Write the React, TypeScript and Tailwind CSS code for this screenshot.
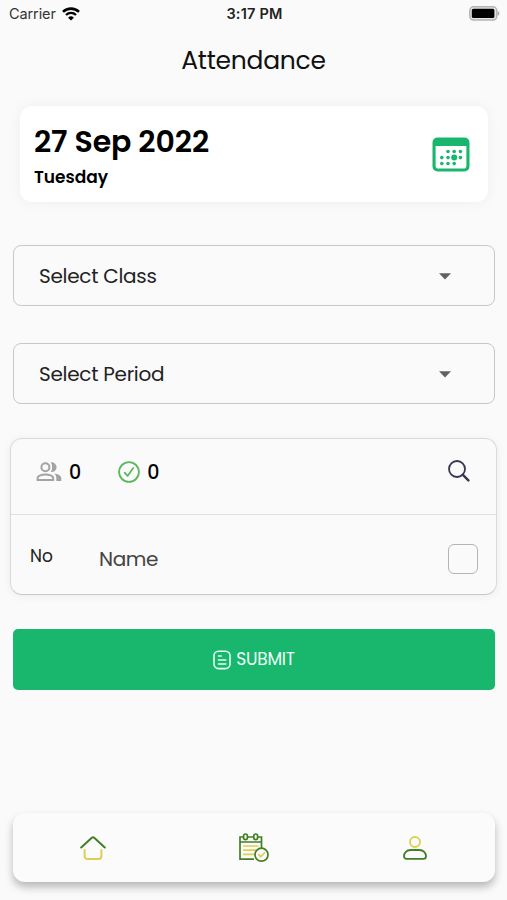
import type { ReactNode } from 'react'

type SelectProps = {
    label: string
}

function WifiIcon() {
    return (
        <svg className="w-[18px] h-[14px]" viewBox="0 0 18 14" fill="none" stroke="#000">
            <path d="M1 4.9a11.3 11.3 0 0 1 16 0" strokeWidth="2.6" />
            <path d="M4 8a7 7 0 0 1 10 0" strokeWidth="2.2" />
            <path d="M9 13.6 6.1 10.7a4.1 4.1 0 0 1 5.8 0Z" fill="#000" stroke="none" />
        </svg>
    )
}

function BatteryIcon() {
    return (
        <svg className="w-[31px] h-[15px]" viewBox="0 0 31 15">
            <rect x="0.8" y="0.8" width="27" height="13.2" rx="3.8" fill="#e4e4e4" stroke="#b4b4b4" strokeWidth="1.5" />
            <rect x="2.8" y="2.8" width="22.6" height="9.2" rx="1.6" fill="#000" />
            <path d="M28.6 5c2.4.8 2.4 4 0 4.8Z" fill="#a8a8a8" />
        </svg>
    )
}

function CalendarIcon() {
    return (
        <svg className="w-[38px] h-[35px]" viewBox="0 0 38 35" fill="#18b76d">
            <path fillRule="evenodd" d="M5.5.5h27a5 5 0 0 1 5 5v24a5 5 0 0 1-5 5h-27a5 5 0 0 1-5-5v-24a5 5 0 0 1 5-5ZM3.6 9v19.8a2.8 2.8 0 0 0 2.8 2.8h25.2a2.8 2.8 0 0 0 2.8-2.8V9Z" />
            <circle cx="16" cy="14.5" r="1.8" />
            <circle cx="22.2" cy="14.5" r="1.8" />
            <circle cx="28.4" cy="14.5" r="1.8" />
            <circle cx="9.8" cy="20.6" r="1.8" />
            <circle cx="16" cy="20.6" r="1.8" />
            <circle cx="22.2" cy="20.6" r="3" />
            <circle cx="28.4" cy="20.6" r="1.8" />
            <circle cx="9.8" cy="26.6" r="1.8" />
            <circle cx="16" cy="26.6" r="1.8" />
            <circle cx="22.2" cy="26.6" r="1.8" />
        </svg>
    )
}

function PeopleIcon() {
    return (
        <svg className="w-[26px] h-[20px]" viewBox="0 0 26 20" fill="none" stroke="#a3a3a3" strokeWidth="2">
            <circle cx="9.4" cy="5.2" r="4" />
            <path d="M1.6 18.1v-2c0-2.4 4.5-3.7 7.8-3.7s7.8 1.3 7.8 3.7v2Z" />
            <path d="M14.7.4a4.9 4.9 0 1 1 0 9.6c1.9-2.7 1.9-6.9 0-9.6Z" fill="#a3a3a3" stroke="none" />
            <path d="M18.3 11.5c3.7.5 7 2.2 7 4.7v2.9h-5v-2.9c0-2-.7-3.6-2-4.7Z" fill="#a3a3a3" stroke="none" />
        </svg>
    )
}

function CheckCircleIcon() {
    return (
        <svg className="w-[22px] h-[22px]" viewBox="0 0 22 22" fill="none" stroke="#5cb85f" strokeWidth="1.8" strokeLinecap="round" strokeLinejoin="round">
            <circle cx="11" cy="11" r="9.9" />
            <path d="m6.7 11.7 2.9 3.2 5.6-7.8" />
        </svg>
    )
}

function SearchIcon() {
    return (
        <svg className="w-[22px] h-[22px]" viewBox="0 0 22 22" fill="none" stroke="#39344f">
            <circle cx="9" cy="9" r="8" strokeWidth="1.8" />
            <path d="m14.7 14.7 5.7 5.7" strokeWidth="2.4" strokeLinecap="round" />
        </svg>
    )
}

function NoteIcon() {
    return (
        <svg className="w-[18px] h-[20px]" viewBox="0 0 18 20" fill="none" stroke="#e6fff2" strokeWidth="1.6" strokeLinecap="round">
            <rect x="1" y="1.2" width="16" height="17.4" rx="4.5" />
            <path d="M5.5 6h2.7M5.500 10h7.3M5.5 14h7.3" />
        </svg>
    )
}

function HomeIcon() {
    return (
        <svg className="w-[26px] h-[24px]" viewBox="0 0 26 24" fill="none" strokeWidth="2" strokeLinecap="round" strokeLinejoin="round">
            <path d="M1.2 11.5 11.8 1.8a1.8 1.8 0 0 1 2.4 0l10.6 9.7" stroke="#437f24" />
            <path d="M4.6 14v6.3a2.700 2.700 0 0 0 2.7 2.7h11.4a2.7 2.7 0 0 0 2.7-2.7V14" stroke="#ddcf52" />
        </svg>
    )
}

function AttendanceIcon() {
    return (
        <svg className="w-[30px] h-[30px]" viewBox="0 0 30 30" fill="none" stroke="#437f24" strokeWidth="1.7">
            <path d="M15 26.2H1V4h21.5v11.5M1 9h21.5" />
            <g stroke="#ddcf52" strokeLinecap="round">
                <path d="M4.8 13h14M4.8 17.2h12M4.8 21.4h10" />
            </g>
            <rect x="4.600" y="1" width="3.8" height="5.6" rx="1.9" fill="#fafafa" />
            <rect x="14.8" y="1" width="3.8" height="5.6" rx="1.9" fill="#fafafa" />
            <circle cx="22.5" cy="21.7" r="6.5" fill="#fafafa" />
            <path d="m19.7 21.7 2 2 3.7-3.7" stroke="#ddcf52" strokeLinecap="round" />
        </svg>
    )
}

function ProfileIcon() {
    return (
        <svg className="w-[24px] h-[24px]" viewBox="0 0 24 24" fill="none" strokeWidth="1.8">
            <circle cx="12" cy="6" r="5" stroke="#ddcf52" />
            <path d="M7.5 14h9c3.8 0 6.5 3 6.5 6.3 0 1.6-1 2.6-2.6 2.6H3.6C2 22.9 1 21.9 1 20.3 1 17 3.7 14 7.5 14Z" stroke="#437f24" />
        </svg>
    )
}

function Select({ label }: SelectProps) {
    return (
        <button className="flex items-center justify-between w-full h-[61px] pl-[25px] pr-[43px] border border-[#c8c8c8] rounded-lg text-[20px] tracking-[-0.28px] text-[#222]">
            <span>{label}</span>
            <svg className="w-[12px] h-[7px] mt-[1px]" viewBox="0 0 12 7" fill="#606060">
                <path d="M0 .3h12L6 6.5Z" />
            </svg>
        </button>
    )
}

function Count({ icon, value }: { icon: ReactNode, value: number }) {
    return (
        <div className="flex items-center gap-[7px]">
            {icon}
            <span className="pt-[3px] text-[19px] font-medium text-black">{value}</span>
        </div>
    )
}

export default function App() {
    return (
        <div className="flex flex-col w-full h-[900px] bg-[#fafafa] font-['Poppins','Inter',sans-serif] text-[#111]">
            <header className="grid grid-cols-3 items-center h-[27px] pl-[9px] pr-[7px] font-['Inter',sans-serif]">
                <div className="flex items-center gap-[6px] text-[14.5px] tracking-[-0.1px] text-[#333]">
                    <span>Carrier</span>
                    <WifiIcon />
                </div>
                <span className="text-[14.5px] tracking-[0.2px] font-semibold text-center text-[#222]">3:17 PM</span>
                <div className="flex justify-end">
                    <BatteryIcon />
                </div>
            </header>

            <h1 className="mt-[15px] h-[36px] text-[25px] leading-[37px] tracking-[-0.25px] text-center">Attendance</h1>

            <section className="flex items-center justify-between mt-[28px] ml-[20px] mr-[19px] h-[96px] pl-[14px] pr-[18px] bg-white rounded-[12px] shadow-[0_0_14px_rgba(0,0,0,0.05)]">
                <div className="pt-[7px]">
                    <p className="text-[30px] leading-[38px] tracking-[-0.1px] font-semibold text-black">27 Sep 2022</p>
                    <p className="text-[17px] leading-[32px] font-semibold text-black">Tuesday</p>
                </div>
                <CalendarIcon />
            </section>

            <div className="flex flex-col gap-[37px] mt-[43px] ml-[13px] mr-[12px]">
                <Select label="Select Class" />
                <Select label="Select Period" />
            </div>

            <section className="mt-[34px] mx-[10px] h-[157px] border border-[#dadada] border-b-[#c8c8c8] rounded-[12px] shadow-[0_1px_8px_rgba(0,0,0,0.06)]">
                <div className="flex items-center h-[76px] pl-[25px] pr-[26px] pb-[10px] border-b border-[#e0e0e0]">
                    <Count icon={<PeopleIcon />} value={0} />
                    <div className="ml-[37px]">
                        <Count icon={<CheckCircleIcon />} value={0} />
                    </div>
                    <button className="ml-auto pb-[2px]">
                        <SearchIcon />
                    </button>
                </div>
                <div className="flex items-center h-[79px] pl-[19px] pr-[18px] pt-[8px]">
                    <span className="w-[69px] pb-[4px] text-[17px] text-[#222]">No</span>
                    <span className="text-[20px] tracking-[-0.4px] text-[#444]">Name</span>
                    <span className="ml-auto w-[30px] h-[30px] border border-[#b5b5b5] rounded-[6px]"></span>
                </div>
            </section>

            <button className="flex items-center justify-center gap-[5px] mt-[34px] ml-[13px] mr-[12px] h-[61px] bg-[#18b76d] rounded-[5px] text-[17px] tracking-[-0.25px] text-[#f0fff7]">
                <NoteIcon />
                <span>SUBMIT</span>
            </button>

            <nav className="grid grid-cols-3 items-center mt-[123px] ml-[13px] mr-[12px] h-[69px] bg-[#fbfbfb] rounded-[12px] shadow-[0_5px_9px_rgba(0,0,0,0.27)]">
                <div className="flex justify-center"><HomeIcon /></div>
                <div className="flex justify-center"><AttendanceIcon /></div>
                <div className="flex justify-center"><ProfileIcon /></div>
            </nav>
        </div>
    )
}
